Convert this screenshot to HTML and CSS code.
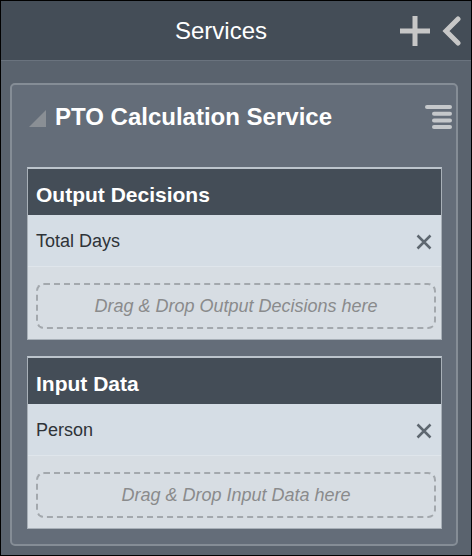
FILE: index.html
```html
<!DOCTYPE html>
<html>
<head>
<meta charset="utf-8">
<link rel="stylesheet" href="styles.css">
</head>
<body>
<div class="frame">
  <div class="topbar">
    <div class="topbar-title">Services</div>
    <div class="topbar-icons">
      <svg class="icon-plus" width="30" height="30" viewBox="0 0 30 30"><rect x="12.5" y="0" width="5" height="30" fill="#c7c7c7"/><rect x="0" y="12.5" width="30" height="5" fill="#c7c7c7"/></svg>
      <svg class="icon-back" width="20" height="30" viewBox="0 0 20 30"><path d="M16 3 L4 15 L16 27" fill="none" stroke="#c7c7c7" stroke-width="5" stroke-linecap="round" stroke-linejoin="miter"/></svg>
    </div>
  </div>
  <div class="panel">
    <div class="panel-head">
      <svg class="tri" width="17" height="17" viewBox="0 0 17 17"><polygon points="17,0 17,17 0,17" fill="#8a8f95"/></svg>
      <div class="panel-title">PTO Calculation Service</div>
      <svg class="menu" width="28" height="26" viewBox="0 0 28 26"><g stroke="#c5c8cb" stroke-width="4" stroke-linecap="round"><line x1="2" y1="2" x2="25" y2="2"/><line x1="9" y1="8.7" x2="25" y2="8.7"/><line x1="9" y1="15.4" x2="25" y2="15.4"/><line x1="9" y1="22.1" x2="25" y2="22.1"/></g></svg>
    </div>
    <div class="cards">
      <div class="card">
        <div class="card-head">Output Decisions</div>
        <div class="card-row">
          <span class="row-label">Total Days</span>
          <svg class="x" width="16" height="16" viewBox="0 0 16 16"><path d="M1.5 1.5 L14.5 14.5 M14.5 1.5 L1.5 14.5" stroke="#5e6770" stroke-width="2.5" fill="none"/></svg>
        </div>
        <div class="drop-area">
          <div class="dropzone">Drag &amp; Drop Output Decisions here</div>
        </div>
      </div>
      <div class="card">
        <div class="card-head">Input Data</div>
        <div class="card-row">
          <span class="row-label">Person</span>
          <svg class="x" width="16" height="16" viewBox="0 0 16 16"><path d="M1.5 1.5 L14.5 14.5 M14.5 1.5 L1.5 14.5" stroke="#5e6770" stroke-width="2.5" fill="none"/></svg>
        </div>
        <div class="drop-area">
          <div class="dropzone">Drag &amp; Drop Input Data here</div>
        </div>
      </div>
    </div>
  </div>
</div>
</body>
</html>
```

FILE: styles.css
```css
* { box-sizing: border-box; }
html, body { margin: 0; padding: 0; }
body {
  font-family: "Liberation Sans", Arial, sans-serif;
  background: #000;
}
.frame {
  width: 472px;
  height: 556px;
  border: 1px solid #000;
  background: #5a636e;
  overflow: hidden;
}
.topbar {
  height: 60px;
  background: #444d57;
  border-bottom: 1px solid #6a737e;
  display: flex;
  align-items: center;
  padding-left: 41px;
}
.topbar-title {
  flex: 1;
  text-align: center;
  color: #ffffff;
  font-size: 24px;
  line-height: 28px;
}
.topbar-icons {
  display: flex;
  align-items: center;
  gap: 12px;
  padding-right: 9px;
  margin-top: 1px;
}
.icon-plus, .icon-back { display: block; }
.panel {
  margin: 22px 13px 0 9px;
  border: 2px solid #858d96;
  border-radius: 5px;
  background: #646d79;
  padding-bottom: 15px;
}
.panel-head {
  display: flex;
  align-items: center;
  padding: 18px 3px 0 17px;
  margin-bottom: 36px;
  height: 46px;
}
.tri { display: block; margin-top: 3px; }
.panel-title {
  flex: 1;
  margin-left: 9px;
  color: #ffffff;
  font-size: 24px;
  font-weight: bold;
  line-height: 28px;
}
.menu { display: block; margin-top: 2px; }
.cards {
  display: flex;
  flex-direction: column;
  gap: 16px;
  padding: 0 14px 0 15px;
}
.card {
  border: 1px solid #a8b0b8;
  border-top: 2px solid #bcc4cc;
  background: #d6dee5;
}
.card-head {
  background: #444d57;
  color: #ffffff;
  font-size: 21px;
  font-weight: bold;
  line-height: 24px;
  height: 46px;
  padding: 14px 8px 8px 8px;
}
.card-row {
  height: 52px;
  display: flex;
  align-items: center;
  justify-content: space-between;
  padding: 0 9px 0 8px;
  border-bottom: 1px solid #dfe5eb;
  background: #d5dde5;
}
.row-label {
  color: #2f3338;
  font-size: 18px;
  margin-top: 2px;
}
.x { display: block; margin-top: 3px; }
.drop-area {
  padding: 16px 5px 10px 8px;
  background: #d7dde3;
}
.dropzone {
  height: 46px;
  border: 2px dashed #a3a8ad;
  border-radius: 8px;
  display: flex;
  align-items: center;
  justify-content: center;
  color: #8a8b8c;
  font-style: italic;
  font-size: 18px;
}
```
